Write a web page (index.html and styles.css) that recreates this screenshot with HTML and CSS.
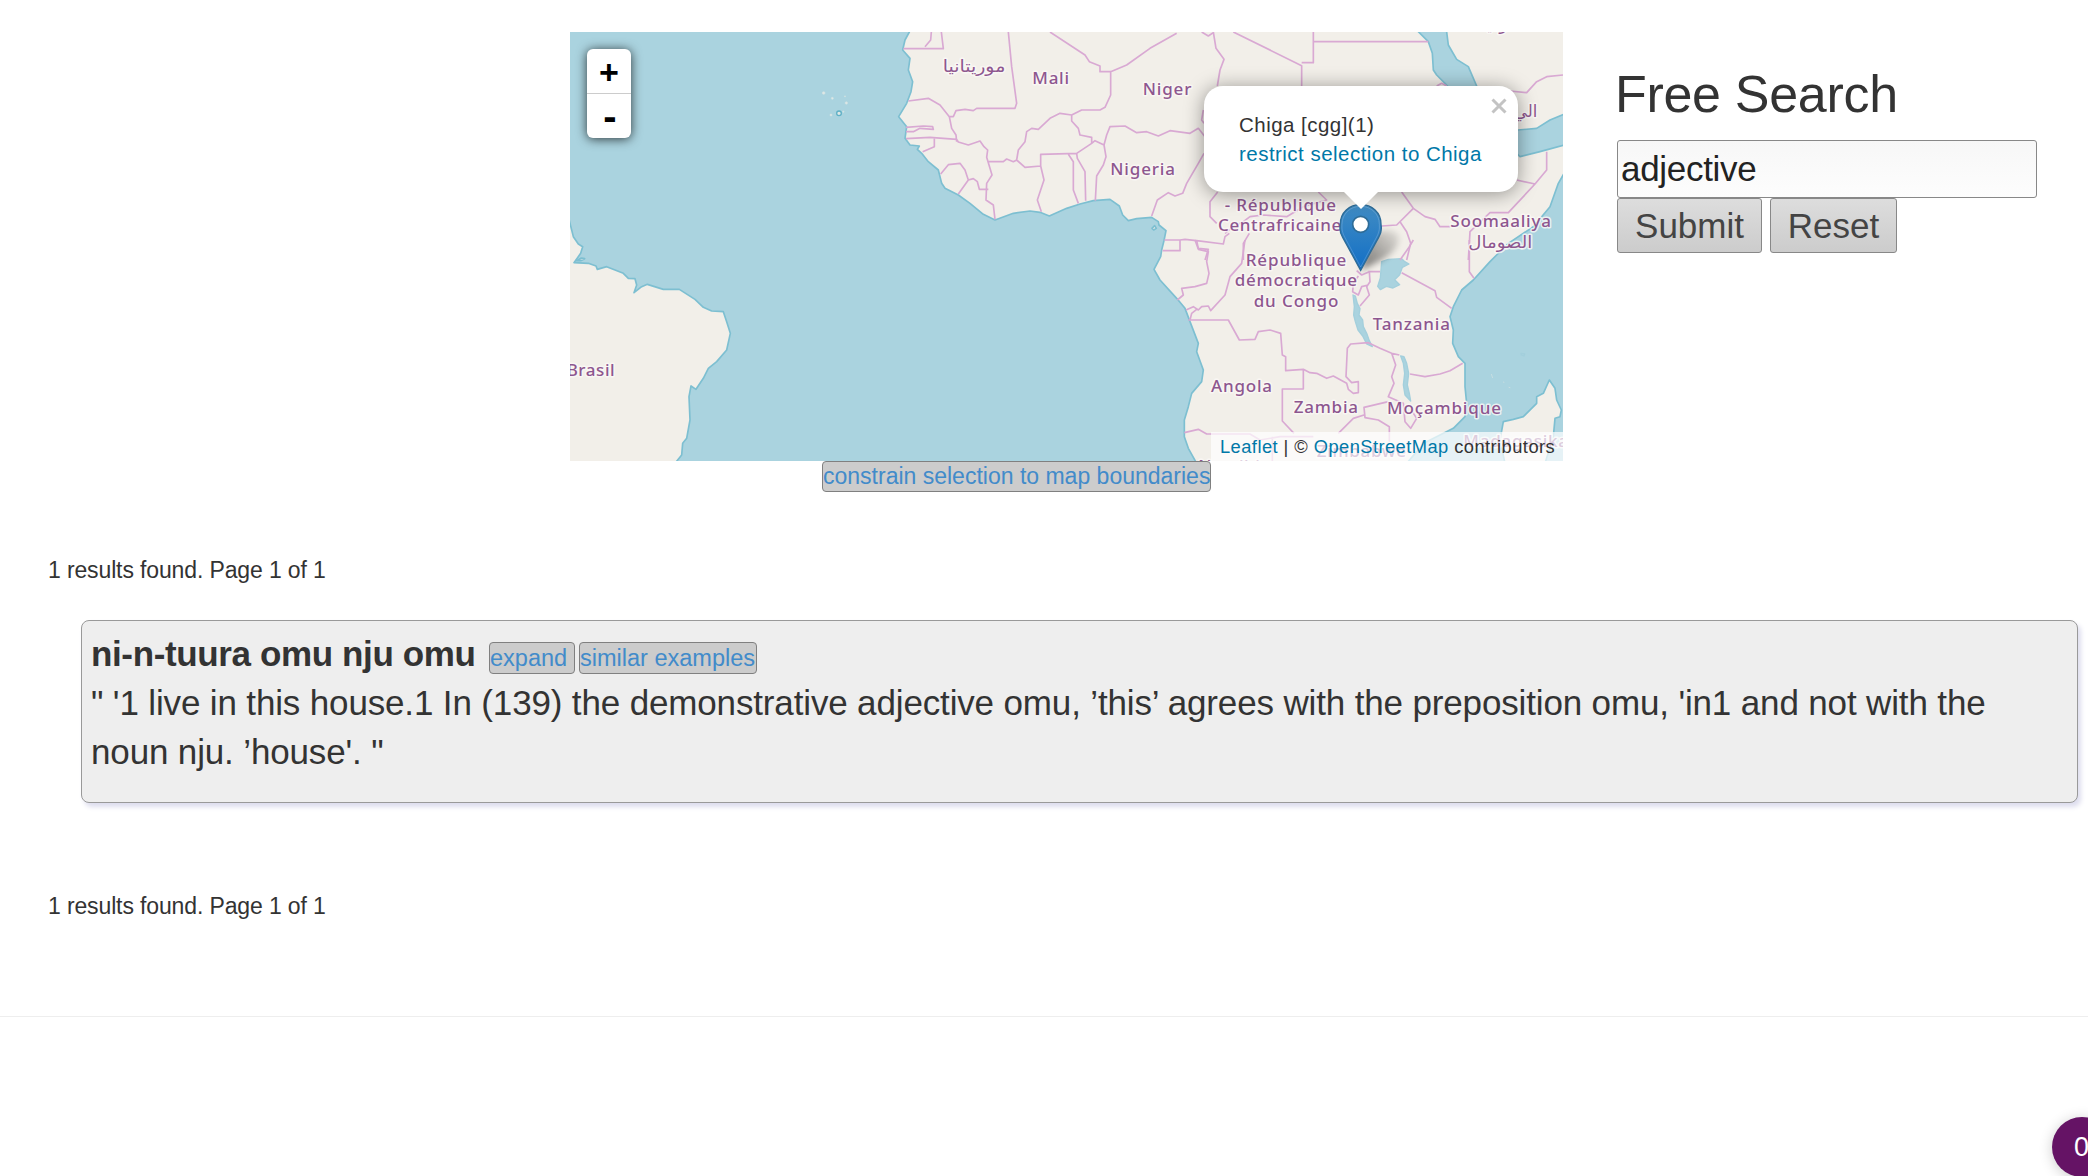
FILE: index.html
```html
<!DOCTYPE html>
<html lang="en">
<head>
<meta charset="utf-8">
<title>Free Search</title>
<link rel="stylesheet" href="styles.css">
</head>
<body>
<main class="page">
  <div class="top">
    <section class="map-column">
      <div class="map">
        <svg class="tiles" viewBox="30 36 2979 1287" preserveAspectRatio="none">
          <g class="land">
            <path d="M1050 20L1048 36 1035 60 1028 90 1050 115 1045 150 1058 185 1053 215 1040 250 1016 290 1040 320 1035 355 1050 375 1078 378 1072 388 1085 400 1105 425 1135 450 1145 490 1155 505 1195 525 1230 550 1270 583 1305 600 1360 580 1410 573 1440 577 1468 588 1520 565 1560 552 1600 542 1650 538 1678 558 1688 585 1705 602 1730 596 1775 592 1795 605 1797 615 1818 632 1812 662 1805 690 1802 710 1782 748 1800 780 1850 835 1875 865 1890 905 1915 970 1910 995 1930 1050 1925 1085 1895 1120 1885 1160 1873 1200 1873 1250 1885 1285 1910 1330H2540L2570 1295 2600 1265 2680 1225 2715 1190 2720 1150 2715 1100 2715 1030 2695 1010 2678 970 2680 930 2670 890 2680 860 2705 810 2740 780 2790 725 2845 670 2920 620 2970 560 2995 490 3018 450V374L2940 395 2880 410 2700 240 2655 190 2630 165 2620 150 2617 100 2605 65 2560 20Z"/>
            <path d="M2658 20L2665 75 2690 118 2725 140 2750 198 2800 320 2874 330 2930 325 2970 300 3018 280V20Z"/>
            <path d="M20 570L40 650 55 672 68 680 62 700 42 728 85 730 108 738 112 748 140 740 190 760 205 775 225 776 230 795 222 818 245 800 262 793 310 808 358 808 405 838 430 862 455 873 490 875 500 905 511 940 500 990 470 1025 445 1045 430 1075 408 1108 393 1098 387 1130 390 1200 380 1255 368 1270 365 1305 345 1330H20Z"/>
            <path d="M2835 1330L2820 1260 2830 1205 2860 1198 2890 1190 2930 1150 2930 1130 2950 1120 2968 1080 2985 1105 2990 1140 3004 1170 3000 1190 2985 1195 2980 1250 2955 1330Z"/>
            <path d="M50 722l14-8 10 2-12 6zM1776 625l8-8 5 8-8 5z"/>
          </g>
          <g class="isles">
            <circle cx="791" cy="219" r="4"/><circle cx="817" cy="235" r="3"/><circle cx="855" cy="229" r="1.5"/><circle cx="859" cy="249" r="3.5"/><circle cx="813" cy="285" r="3"/><circle cx="850" cy="275" r="2"/>
            <circle class="ring" cx="837" cy="280" r="7"/><path d="M2794 1062l4 12M2829 1086l4 1M2846 1102l5 1"/>
          </g>
          <path class="lake" d="M2883 1000l11 2-2 6-8-3z"/>
          <path class="lake" d="M2465 725l20-7 40-2 8 8 14 8-20 10-8 22-15 15 15 15-20 10-20-5-18 10-8-10 8-25 2-25zM2379 825L2386 828 2392 850 2400 866 2397 885 2408 900 2410 920 2420 940 2428 962 2437 980 2420 972 2408 948 2394 930 2386 905 2381 885 2383 860ZM2522 1008L2532 1010 2540 1030 2546 1060 2542 1095 2548 1120 2552 1143 2535 1125 2530 1095 2534 1060 2530 1030Z"/>
          <g class="border" transform="translate(960)">
            <path d="M70 86H190L184 36M135 80L152 60 154 36M385 36L395 140 410 250 405 265H290L280 272 255 268 228 272 220 290H208L180 255 145 235 85 243M208 290L215 325 228 345 230 365M78 322L130 318 158 320 160 328 120 325 100 335H78M78 356L150 352 230 358 235 366 265 375 300 363 312 380 323 390 320 412 325 428M163 356L163 380 128 395M182 462L205 434 240 430 255 450 265 480 280 476 292 485 298 508 325 508M265 480L235 522M325 428L330 445 336 465 320 490 318 540 340 555 345 598M325 425H370L380 417 400 425 410 420 415 390 435 365 440 335 455 325 475 328 510 295 540 280 575 285 605 270 660 270 675 262 692 225V155H660V138L628 125 615 105 510 36M410 420L435 442 482 438V403L590 400 635 370V352L600 345 595 325 575 303 575 285M482 438L492 480 472 540 484 575M565 403L580 425 580 510 595 550M590 400L592 415 615 455 617 542M635 370L645 362 672 375 680 345 690 320 735 318 770 338 800 335 835 348 870 332 930 340 955 325 975 350M672 375L678 410 670 435 650 468 646 542M692 155L740 135 810 85 890 40M1000 36L1008 85 1032 118 1020 150 1012 198M970 270L965 300 972 310M972 400L955 430 920 490 908 520 885 528 865 518 832 540 815 588M1013 516L990 545V590L1010 610M853 660H900V692H848M900 660L915 658 950 662 1030 672 1035 650 1048 640M950 662L955 685 985 688 975 720M965 36L985 48 1000 38"/>
          </g>
          <g class="border" transform="translate(1860)">
            <path d="M160 36L365 137V198M365 128H400V36M400 65H745M990 213L1040 218 1070 185 1100 170 1149 165M800 198L785 190 770 198M1100 395V450L1065 492 1010 480M1065 492L985 578H930L870 635 865 720M665 516L700 565 735 590 765 598 780 620H812M700 565L650 615 605 618M660 605L680 635 692 670 680 720M135 640L160 620 190 605 210 590 250 585 320 590 370 560 440 540 415 516M208 640L190 670V720"/>
          </g>
          <g class="border" transform="translate(1740 660)">
            <path d="M165 0L175 28 205 35 200 65 207 100 200 130 165 140 125 145 130 165 112 180M315 0L305 70 270 110 255 165 212 212 205 198 185 200 175 210 160 200 138 210M150 240L155 220 170 208M145 240H265L298 300 345 298 355 275 390 270 422 280 427 345 437 350V392L490 388 510 398 530 400 560 415 580 408 620 430 625 448 640 460 655 458V425L635 428 618 410 622 325 632 312 685 308 720 325 755 340 778 345M490 388V447H427V543L462 580M685 95H720M785 98L885 152 890 172 935 205M820 0L805 25 780 60M688 95L690 125 680 140 688 165 660 198M655 108L640 130 638 155 655 165 665 140 685 135M650 92L665 105 688 95M988 0V95L1002 115M810 402L855 410 900 402 930 392 968 370M755 340L767 375 755 410 762 430 745 470 790 490 795 545 812 565 830 535 815 512M745 485L672 502 675 533 715 540 748 560V605M672 525L640 535 595 580M133 578L175 568 200 582H330L360 600 420 590 520 590M397 590V663"/>
          </g>
          <g class="labels">
            <text x="1148" y="155" textLength="188" lengthAdjust="spacingAndGlyphs" class="arabic">موريتانيا</text>
            <text x="1417" y="192" textLength="110">Mali</text>
            <text x="1748" y="226" textLength="146">Niger</text>
            <text x="1651" y="465" textLength="194">Nigeria</text>
            <text x="1994" y="573" textLength="334">- République</text>
            <text x="1974" y="634" textLength="370">Centrafricaine</text>
            <text x="2057" y="737" textLength="302">République</text>
            <text x="2024" y="798" textLength="367">démocratique</text>
            <text x="2081" y="860" textLength="254">du Congo</text>
            <text x="2438" y="929" textLength="232">Tanzania</text>
            <text x="2671" y="622" textLength="302">Soomaaliya</text>
            <text x="2725" y="683" textLength="192" lengthAdjust="spacingAndGlyphs" class="arabic">الصومال</text>
            <text x="2862" y="292" textLength="70" lengthAdjust="spacingAndGlyphs" class="arabic">الي</text>
            <text x="2755" y="30" class="arabic">السعودية</text>
            <text x="1953" y="1116" textLength="183">Angola</text>
            <text x="2201" y="1180" textLength="193">Zambia</text>
            <text x="2481" y="1182" textLength="342">Moçambique</text>
            <text x="2270" y="1311" textLength="268">Zimbabwe</text>
            <text x="2710" y="1281" textLength="368">Madagasikara</text>
            <text x="1915" y="1357" textLength="215">Namibia</text>
            <text x="20" y="1067" textLength="144">Brasil</text>
          </g>
          <defs>
            <linearGradient id="pin" x2="0" y2="1"><stop stop-color="#418cc3"/><stop offset="1" stop-color="#126fc6"/></linearGradient>
            <filter id="soft" x="-40%" y="-40%" width="180%" height="180%"><feGaussianBlur stdDeviation="9"/></filter>
            <linearGradient id="shade" x1="0" y1="1" x2="1" y2="0"><stop stop-color="#000" stop-opacity=".8"/><stop offset="1" stop-color="#000" stop-opacity=".1"/></linearGradient>
          </defs>
          <path d="M2404 750L2418 685C2435 635 2475 620 2510 640 2530 665 2500 700 2465 720Z" fill="url(#shade)" opacity=".65" filter="url(#soft)"/>
          <path d="M2402 751L2348 652C2335 630 2341 620 2341 612 2341 577 2368 554 2402 554S2463 577 2463 612C2463 620 2469 630 2456 652Z" fill="url(#pin)" stroke="#2e6c97" stroke-width="4"/>
          <path d="M2402 741L2354 651C2344 632 2346 622 2346 613 2346 581 2371 559 2402 559S2458 581 2458 613C2458 622 2460 632 2450 651Z" fill="none" stroke="#fff" stroke-opacity=".18" stroke-width="3"/>
          <circle cx="2402" cy="613" r="24" fill="#fff" stroke="#2e6c97" stroke-width="5"/>
        </svg>
        <div class="zoom"><a class="zoom-btn">+</a><a class="zoom-btn minus">-</a></div>
        <div class="popup">
          <svg class="close" viewBox="0 0 16 16"><path d="M1.5 1.5l13 13M14.5 1.5l-13 13"/></svg>
          <div>Chiga [cgg](1)</div>
          <a class="map-link">restrict selection to Chiga</a>
        </div>
        <div class="attribution"><a class="map-link">Leaflet</a> | © <a class="map-link">OpenStreetMap</a> contributors</div>
      </div>
      <a class="chip constrain">constrain selection to map boundaries</a>
    </section>
    <form class="search">
      <h2 class="search-title">Free Search</h2>
      <input class="search-input" type="text" value="adjective">
      <div class="buttons"><button class="btn submit" type="button">Submit</button><button class="btn reset" type="button">Reset</button></div>
    </form>
  </div>
  <p class="count">1 results found. Page 1 of 1</p>
  <article class="result">
    <div class="result-head"><strong class="phrase">ni-n-tuura omu nju omu</strong><a class="chip expand">expand </a><a class="chip similar">similar examples</a></div>
    <div class="quote">" '1 live in this house.1 In (139) the demonstrative adjective omu, ’this’ agrees with the preposition omu, 'in1 and not with the<br>noun nju. ’house'. "</div>
  </article>
  <p class="count count-end">1 results found. Page 1 of 1</p>
  <footer class="footer"></footer>
</main>
<div class="badge">0</div>
</body>
</html>
```
FILE: styles.css
```css
* { box-sizing: border-box; }
html, body { overflow: hidden; }
body {
  margin: 0;
  height: 1176px;
  background: #fff;
  color: #333;
  font: 23px/33px "Liberation Sans", Arial, sans-serif;
}
.page { width: 2088px; padding-top: 32px; }
.top { display: flex; height: 504px; padding-left: 570px; gap: 54px; }
.map-column { width: 993px; flex: none; }
.map { position: relative; width: 993px; height: 429px; overflow: hidden; background: #aad3df; }
.tiles { display: block; width: 993px; height: 429px; }
.land path { fill: #f2efe9; stroke: #7dbfd1; stroke-width: 5; stroke-linejoin: round; }
.isles { fill: #dfe8e6; stroke: #d3e2e3; stroke-width: 2; }
.isles .ring { stroke: #5fb0c6; stroke-width: 4; }
.lake { fill: #aad3df; stroke: #a3cfdc; stroke-width: 4; stroke-linejoin: round; }
.border { fill: none; stroke: #d9a9d3; stroke-width: 5; stroke-linejoin: round; }
.labels text {
  fill: #8d568f;
  stroke: #fbf9f7;
  stroke-opacity: .8;
  stroke-width: 9px;
  paint-order: stroke;
  stroke-linejoin: round;
  font: 500 51px "Noto Sans", "DejaVu Sans", sans-serif;
}
.labels .arabic { font-family: "DejaVu Sans", sans-serif; font-size: 50px; }
.zoom {
  position: absolute; left: 17px; top: 17px; width: 44px; height: 89px;
  background: #fff; border-radius: 6px; box-shadow: 0 1px 11px rgba(0, 0, 0, .75);
}
.zoom-btn { display: block; height: 45px; border-bottom: 1px solid #ccc; color: #000; text-align: center; font: bold 34px/46px "Liberation Sans", Arial, sans-serif; }
.minus { border: 0; height: 44px; font-size: 40px; line-height: 44px; padding-left: 2px; }
.popup {
  position: absolute; left: 634px; top: 54px; width: 314px; height: 106px; padding: 24px 0 0 35px;
  border-radius: 19px; background: #fff; box-shadow: 0 2px 20px rgba(0, 0, 0, .4);
  font-size: 20.5px; line-height: 29px; letter-spacing: .47px; white-space: nowrap;
}
.popup::after {
  content: ""; position: absolute; left: 139px; top: 105px;
  border: solid transparent; border-width: 18px 18px 0; border-top-color: #fff;
}
.map-link { color: #0078a8; }
.close { position: absolute; right: 11px; top: 12px; width: 16px; height: 16px; fill: none; stroke: #c3c3c3; stroke-width: 3; }
.attribution {
  position: absolute; right: 0; bottom: 0; width: 352px; height: 29px; padding-left: 9px;
  background: rgba(255, 255, 255, .7); font-size: 18.3px; line-height: 29px; letter-spacing: .45px; white-space: nowrap;
}
.chip {
  display: inline-block; height: 32px; border: 1px solid #808080; border-radius: 4px;
  background: #ccc; color: #428bca; line-height: 31px; white-space: pre;
}
.constrain { display: block; width: 389px; height: 31px; margin-left: 252px; line-height: 29px; }
.search { width: 421px; }
.search-title { margin: 33px 0 16px -2px; font-size: 52px; line-height: 59px; font-weight: 400; letter-spacing: -.3px; white-space: nowrap; }
.search-input {
  display: block; width: 420px; height: 58px; padding: 0 3px; border: 1px solid #888; border-radius: 3px;
  background: linear-gradient(#f7f7f7, #fdfdfd); color: #222; font: 35px "Liberation Sans", Arial, sans-serif; letter-spacing: -.3px;
}
.buttons { display: flex; gap: 8px; }
.btn {
  height: 55px; padding: 0; border: 1px solid #888; border-radius: 3px;
  background: linear-gradient(#ddd, #ccc); color: #444; font: 35px "Liberation Sans", Arial, sans-serif;
}
.submit { width: 145px; }
.reset { width: 127px; }
.count { height: 33px; margin: 18px 0 0 48px; letter-spacing: -.13px; white-space: nowrap; }
.result {
  width: 1997px; height: 183px; margin: 33px 0 0 81px; padding: 8px 0 0 9px;
  border: 1px solid #999; border-radius: 8px; background: #eee; box-shadow: 3px 4px 5px #dde;
  font-size: 35px; line-height: 49px; white-space: nowrap;
}
.result-head { display: flex; height: 49px; }
.phrase { width: 398px; letter-spacing: -.37px; }
.quote { letter-spacing: -.148px; }
.result .chip { font-size: 23.5px; margin-top: 13px; }
.expand { width: 86px; margin-right: 4px; }
.similar { width: 178px; }
.count-end { margin-top: 87px; }
.footer { margin-top: 93px; border-top: 1px solid #eee; }
.badge {
  position: absolute; left: 2052px; top: 1117px; width: 60px; height: 60px; padding-left: 22px;
  border-radius: 50%; background: #651365; color: #fff; font-size: 27px; line-height: 60px;
  box-shadow: 0 2px 14px rgba(0, 0, 0, .2);
}
```
